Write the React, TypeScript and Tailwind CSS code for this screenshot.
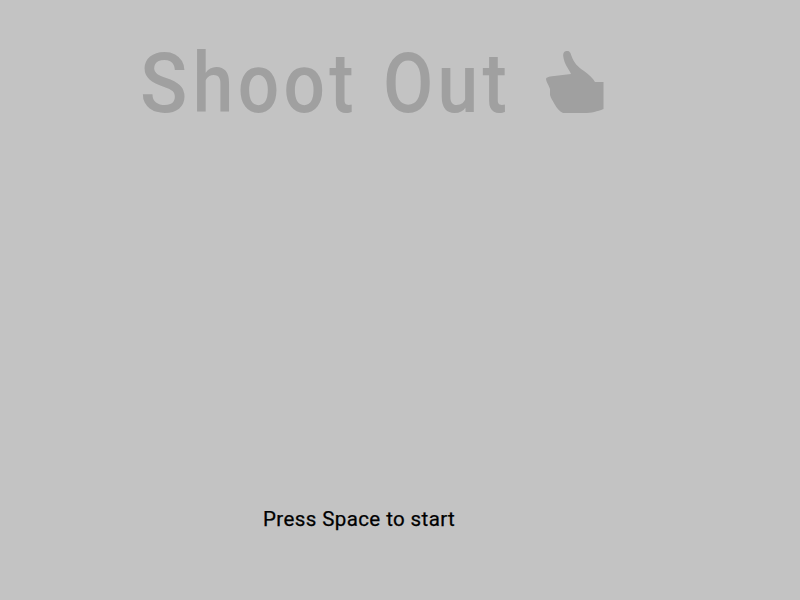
export default function App() {
  return (
    <main className="flex h-[600px] w-[800px] flex-col justify-between overflow-hidden bg-[#c3c3c3]">
      <header className="flex pl-[140px] pt-[36px]">
        <h1 className="w-[405px] origin-left scale-x-[0.88] whitespace-nowrap font-['Roboto',sans-serif] text-[83px] font-medium leading-[96px] tracking-[4.9px] text-[#a0a0a0] [word-spacing:3px]">
          <span className="inline-block w-[60px] origin-left scale-x-[1.07]">S</span>hoot Out
        </h1>
        <svg className="mt-[14px] h-[64px] w-[60px]" viewBox="545 50 60 64" fill="#a0a0a0">
          <path d="M563.2 56C563 52 565 51 567 51C570 51 570.5 53 571.5 56C574 63 578 67 584 71C589 75 593 78 595 82H603.5V109C597 111.5 592 113 584 113H563C560 111.5 557 109 554.5 104C552.5 100 551 99 550 95V89C548 84 546 81 546 79C546 77.5 548 77 550 76.5L571 74C569 69 564 64 563.2 56Z" />
        </svg>
      </header>
      <p className="mb-[67px] ml-[263px] origin-left whitespace-nowrap font-['Roboto',sans-serif] text-[20.5px] leading-7 tracking-[0.4px] text-black [-webkit-text-stroke:0.25px_black]">Press Space to start</p>
    </main>
  );
}
